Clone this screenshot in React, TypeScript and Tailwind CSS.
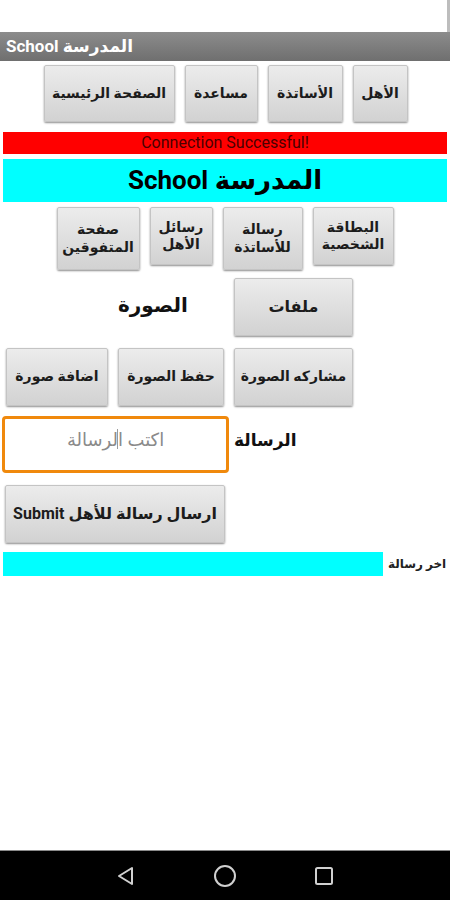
import React from 'react';

const font = { fontFamily: "Roboto, 'DejaVu Sans', sans-serif" };

function Btn({ children, className = '' }: { children: React.ReactNode; className?: string }) {
  return (
    <button
      className={`flex items-center justify-center rounded-[2px] border border-[#c4c4c4] bg-gradient-to-b from-[#ececec] to-[#d2d2d2] text-[#1c1c1c] font-bold leading-[1.25] shadow-[0_1px_2px_rgba(0,0,0,0.45)] ${className}`}
    >
      {children}
    </button>
  );
}

export default function App() {
  return (
    <div className="w-[450px] h-[900px] bg-white flex flex-col" style={font}>
      {/* status area */}
      <div className="h-[32px] border-r-[3px] border-[#bdbdbd]" />

      {/* title bar */}
      <div className="h-[29px] bg-gradient-to-b from-[#8c8c8c] to-[#6f6f6f] flex items-center px-[6px]">
        <span dir="rtl" className="text-white text-[17px] font-bold">المدرسة School</span>
      </div>

      {/* top nav */}
      <div dir="rtl" className="flex justify-center gap-[10px] mt-[4px] pl-[1px]">
        <Btn className="w-[55px] h-[57px] text-[14px]">الأهل</Btn>
        <Btn className="w-[75px] h-[57px] text-[14px]">الأساتذة</Btn>
        <Btn className="w-[73px] h-[57px] text-[14px]">مساعدة</Btn>
        <Btn className="w-[131px] h-[57px] text-[14px]">الصفحة الرئيسية</Btn>
      </div>

      <div className="mx-[3px] mt-[10px] h-[22px] bg-[#ff0000] flex items-center justify-center text-[16px] text-[#4a0000]">
        Connection Successful!
      </div>

      <div
        dir="rtl"
        className="mx-[3px] mt-[5px] h-[43px] bg-[#00ffff] flex items-center justify-center text-[26px] font-bold text-black"
      >
        المدرسة School
      </div>

      {/* second nav */}
      <div dir="rtl" className="flex justify-center items-start gap-[10px] mt-[5px]">
        <Btn className="w-[81px] h-[58px] text-[14px]">
          البطاقة
          <br />
          الشخصية
        </Btn>
        <Btn className="w-[80px] h-[63px] text-[14px]">
          رسالة
          <br />
          للأساتذة
        </Btn>
        <Btn className="w-[63px] h-[58px] text-[14px]">
          رسائل
          <br />
          الأهل
        </Btn>
        <Btn className="w-[83px] h-[63px] text-[14px]">
          صفحة
          <br />
          المتفوقين
        </Btn>
      </div>

      {/* files row */}
      <div className="flex items-center gap-[10px] mt-[8px] pl-[118px]">
        <div className="w-[106px] text-[20px] font-bold text-[#111] pb-[4px]">الصورة</div>
        <Btn className="w-[119px] h-[58px] text-[16px]">ملفات</Btn>
      </div>

      {/* image actions */}
      <div className="flex gap-[10px] mt-[12px] pl-[6px]">
        <Btn className="w-[102px] h-[58px] text-[14px]">اضافة صورة</Btn>
        <Btn className="w-[106px] h-[58px] text-[14px]">حفظ الصورة</Btn>
        <Btn className="w-[119px] h-[58px] text-[14px]">مشاركه الصورة</Btn>
      </div>

      {/* message input */}
      <div className="flex items-center gap-[5px] mt-[10px] pl-[2px]">
        <div
          dir="rtl"
          className="w-[227px] h-[57px] rounded-[4px] border-[3px] border-[#f0890c] flex justify-center pt-[7px] text-[18px] text-[#8a8a8a]"
        >
          <span className="relative">
            اكتب الرسالة
            <span className="absolute left-[50px] top-[3px] w-px h-[20px] bg-[#9a9a9a]" />
          </span>
        </div>
        <div className="text-[17px] font-bold text-[#111] pb-[8px]">الرسالة</div>
      </div>

      {/* submit */}
      <div className="mt-[12px] pl-[5px]">
        <Btn className="w-[220px] h-[58px] text-[16px]">
          <span dir="rtl">ارسال رسالة للأهل Submit</span>
        </Btn>
      </div>

      {/* last message */}
      <div className="flex items-center gap-[5px] mt-[9px] pl-[3px]">
        <div className="w-[380px] h-[24px] bg-[#00ffff]" />
        <div className="text-[12px] font-bold text-[#222]">اخر رسالة</div>
      </div>

      <div className="flex-1" />

      {/* android nav */}
      <div className="h-[50px] bg-black border-t border-[#8a8a8a] flex items-center justify-center gap-[76px]">
        <svg width="22" height="22" viewBox="0 0 22 22" fill="none" stroke="#d0d0d0" strokeWidth="2" strokeLinejoin="round">
          <path d="M17 3 L17 19 L4 11 Z" />
        </svg>
        <svg width="24" height="24" viewBox="0 0 24 24" fill="none" stroke="#d0d0d0" strokeWidth="2">
          <circle cx="12" cy="12" r="10" />
        </svg>
        <svg width="22" height="22" viewBox="0 0 22 22" fill="none" stroke="#d0d0d0" strokeWidth="2" strokeLinejoin="round">
          <rect x="3" y="3" width="16" height="16" rx="1.5" />
        </svg>
      </div>
    </div>
  );
}
